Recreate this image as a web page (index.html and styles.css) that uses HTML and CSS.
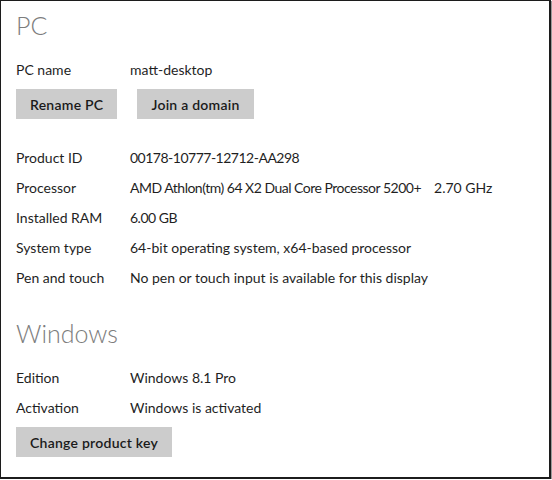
FILE: index.html
```html
<!DOCTYPE html>
<html lang="en">
<head>
<meta charset="utf-8">
<title>PC info</title>
<link rel="stylesheet" href="styles.css">
</head>
<body>
<div class="frame">
  <section class="group">
    <h1 class="title">PC</h1>
    <div class="row"><span class="label">PC name</span><span class="value">matt-desktop</span></div>
    <div class="actions">
      <button class="btn">Rename PC</button>
      <button class="btn">Join a domain</button>
    </div>
    <div class="specs">
      <div class="row"><span class="label">Product ID</span><span class="value num">00178-10777-12712-AA298</span></div>
      <div class="row"><span class="label">Processor</span><span class="value"><span class="num">AMD Athlon(tm) 64 X2 Dual Core Processor 5200+</span><span class="speed">2.70 GHz</span></span></div>
      <div class="row"><span class="label">Installed RAM</span><span class="value num">6.00 GB</span></div>
      <div class="row"><span class="label">System type</span><span class="value">64-bit operating system, x64-based processor</span></div>
      <div class="row"><span class="label">Pen and touch</span><span class="value">No pen or touch input is available for this display</span></div>
    </div>
  </section>
  <section class="group windows">
    <h1 class="title">Windows</h1>
    <div class="row"><span class="label">Edition</span><span class="value">Windows 8.1 Pro</span></div>
    <div class="row"><span class="label">Activation</span><span class="value">Windows is activated</span></div>
    <div class="actions">
      <button class="btn">Change product key</button>
    </div>
  </section>
</div>
</body>
</html>
```
FILE: styles.css
```css
html, body {
  margin: 0;
  padding: 0;
  background: #ffffff;
}
.frame {
  box-sizing: border-box;
  width: 551px;
  height: 479px;
  border-top: 1px solid #1c1c1c;
  border-left: 1px solid #1c1c1c;
  border-right: 2px solid #1c1c1c;
  border-bottom: 2px solid #1c1c1c;
  box-shadow: 1px 1px 0 #9a9a9a;
  padding: 8px 0 0 15px;
  font-family: "Lato", "Liberation Sans", sans-serif;
  font-size: 14px;
  color: #1f1f1f;
}
.title {
  margin: 0;
  font-size: 25px;
  line-height: 32px;
  font-weight: 300;
  color: #7d7d7d;
}
.row {
  display: flex;
  height: 30px;
  line-height: 30px;
  white-space: nowrap;
}
.label {
  width: 114px;
  flex: none;
}
.value {
  flex: none;
}
.num {
  letter-spacing: -0.5px;
}
.speed {
  margin-left: 13px;
}
.group > .row:first-of-type {
  margin-top: 14px;
}
.actions {
  display: flex;
  gap: 20px;
  margin-top: 4px;
}
.btn {
  font: inherit;
  font-weight: 600;
  letter-spacing: 0.25px;
  color: #1a1a1a;
  background: #cccccc;
  border: none;
  height: 30px;
  padding: 0 14px;
  margin: 0;
}
.specs {
  margin-top: 24px;
}
.windows {
  margin-top: 24px;
}
```
